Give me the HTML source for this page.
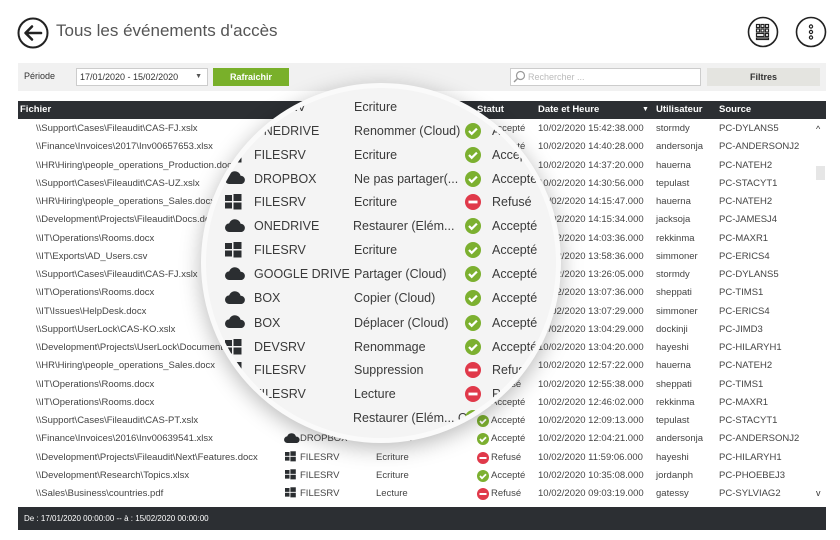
<!DOCTYPE html>
<html><head><meta charset="utf-8">
<style>
*{margin:0;padding:0;box-sizing:border-box}
body{width:840px;height:540px;background:#fff;position:relative;overflow:hidden;font-family:"Liberation Sans",sans-serif;color:#444}
.abs{position:absolute}
.row{position:absolute;left:0;width:840px;height:18px;font-size:9.5px;line-height:18px;white-space:nowrap}
.row span{position:absolute;top:0}
.mrow{position:absolute;left:0;width:840px;height:24px;font-size:12.5px;line-height:24px;color:#3a3a3a;white-space:nowrap}
.mrow span{position:absolute;top:0}
svg{display:block}
</style></head><body>
<svg class="abs" style="left:17px;top:17px" width="32" height="32" viewBox="0 0 32 32"><circle cx="16" cy="16" r="14.5" fill="none" stroke="#222" stroke-width="2"/><path d="M24 16H9M15 9.5L8.5 16l6.5 6.5" fill="none" stroke="#222" stroke-width="2.6" stroke-linecap="round" stroke-linejoin="round"/></svg>
<div class="abs" style="left:56px;top:21px;font-size:17px;color:#555">Tous les événements d'accès</div>
<svg class="abs" style="left:747px;top:16px" width="32" height="32" viewBox="0 0 32 32"><circle cx="16" cy="16" r="14.5" fill="none" stroke="#222" stroke-width="1.6"/><g fill="none" stroke="#222" stroke-width="1.2"><rect x="9.5" y="8.5" width="3" height="3"/><rect x="14" y="8.5" width="3" height="3"/><rect x="18.5" y="8.5" width="3" height="3"/><rect x="9.5" y="13" width="3" height="3"/><rect x="14" y="13" width="3" height="3"/><rect x="18.5" y="13" width="3" height="3"/><rect x="9.5" y="17.5" width="7.5" height="3"/><rect x="18.5" y="17.5" width="3" height="3"/><rect x="9.5" y="22" width="12" height="1.5"/></g></svg>
<svg class="abs" style="left:795px;top:16px" width="32" height="32" viewBox="0 0 32 32"><circle cx="16" cy="16" r="14.5" fill="none" stroke="#222" stroke-width="1.6"/><g fill="none" stroke="#222" stroke-width="1.2"><circle cx="16" cy="10.5" r="1.6"/><circle cx="16" cy="16" r="1.6"/><circle cx="16" cy="21.5" r="1.6"/></g></svg>
<div class="abs" style="left:18px;top:63px;width:808px;height:28px;background:#f1f1f1"></div>
<div class="abs" style="left:24px;top:71px;font-size:9px;color:#333">Période</div>
<div class="abs" style="left:76px;top:68px;width:132px;height:18px;background:#fff;border:1px solid #ccc;font-size:9px;line-height:16px;padding-left:3px;color:#333">17/01/2020 - 15/02/2020<span style="position:absolute;right:5px;font-size:7px;color:#555">▼</span></div>
<div class="abs" style="left:213px;top:68px;width:76px;height:18px;background:#79b02a;color:#fff;font-size:9px;line-height:18px;text-align:center;font-weight:bold">Rafraichir</div>
<div class="abs" style="left:510px;top:68px;width:191px;height:18px;background:#fff;border:1px solid #ccc;font-size:9px;line-height:16px;padding-left:17px;color:#bbb">Rechercher ...</div>
<svg class="abs" style="left:513px;top:70px" width="13" height="13" viewBox="0 0 13 13"><circle cx="7.5" cy="5.5" r="4" fill="none" stroke="#999" stroke-width="1.2"/><path d="M4.5 8.5L1 12" stroke="#999" stroke-width="1.4"/></svg>
<div class="abs" style="left:707px;top:68px;width:113px;height:18px;background:#e4e4e0;font-size:9px;line-height:18px;text-align:center;color:#333;font-weight:bold">Filtres</div>
<div class="abs" style="left:18px;top:101px;width:808px;height:18px;background:#2c2f33"></div>
<div class="row" style="top:101px;color:#fff;font-weight:bold;font-size:9.5px"><span style="left:20px">Fichier</span><span style="left:477px">Statut</span><span style="left:538px">Date et Heure</span><span style="left:642px;font-size:7px">▼</span><span style="left:656px">Utilisateur</span><span style="left:719px">Source</span></div>
<div class="abs" style="left:816px;top:124px;font-size:9px;color:#333">^</div>
<div class="abs" style="left:816px;top:166px;width:9px;height:14px;background:#e6e6e6"></div>
<div class="abs" style="left:816px;top:488px;font-size:9px;color:#333">v</div>
<div class="row" style="top:120px"><span style="left:36px">\\Support\Cases\Fileaudit\CAS-FJ.xslx</span><span style="left:491px">Accepté</span><span style="left:538px">10/02/2020 15:42:38.000</span><span style="left:656px">stormdy</span><span style="left:719px">PC-DYLANS5</span></div>
<div class="row" style="top:138.25px"><span style="left:36px">\\Finance\Invoices\2017\Inv00657653.xlsx</span><span style="left:491px">Accepté</span><span style="left:538px">10/02/2020 14:40:28.000</span><span style="left:656px">andersonja</span><span style="left:719px">PC-ANDERSONJ2</span></div>
<div class="row" style="top:156.5px"><span style="left:36px">\\HR\Hiring\people_operations_Production.docx</span><span style="left:538px">10/02/2020 14:37:20.000</span><span style="left:656px">hauerna</span><span style="left:719px">PC-NATEH2</span></div>
<div class="row" style="top:174.75px"><span style="left:36px">\\Support\Cases\Fileaudit\CAS-UZ.xslx</span><span style="left:538px">10/02/2020 14:30:56.000</span><span style="left:656px">tepulast</span><span style="left:719px">PC-STACYT1</span></div>
<div class="row" style="top:193px"><span style="left:36px">\\HR\Hiring\people_operations_Sales.docx</span><span style="left:538px">10/02/2020 14:15:47.000</span><span style="left:656px">hauerna</span><span style="left:719px">PC-NATEH2</span></div>
<div class="row" style="top:211.25px"><span style="left:36px">\\Development\Projects\Fileaudit\Docs.docx</span><span style="left:538px">10/02/2020 14:15:34.000</span><span style="left:656px">jacksoja</span><span style="left:719px">PC-JAMESJ4</span></div>
<div class="row" style="top:229.5px"><span style="left:36px">\\IT\Operations\Rooms.docx</span><span style="left:538px">10/02/2020 14:03:36.000</span><span style="left:656px">rekkinma</span><span style="left:719px">PC-MAXR1</span></div>
<div class="row" style="top:247.75px"><span style="left:36px">\\IT\Exports\AD_Users.csv</span><span style="left:538px">10/02/2020 13:58:36.000</span><span style="left:656px">simmoner</span><span style="left:719px">PC-ERICS4</span></div>
<div class="row" style="top:266px"><span style="left:36px">\\Support\Cases\Fileaudit\CAS-FJ.xslx</span><span style="left:538px">10/02/2020 13:26:05.000</span><span style="left:656px">stormdy</span><span style="left:719px">PC-DYLANS5</span></div>
<div class="row" style="top:284.25px"><span style="left:36px">\\IT\Operations\Rooms.docx</span><span style="left:538px">10/02/2020 13:07:36.000</span><span style="left:656px">sheppati</span><span style="left:719px">PC-TIMS1</span></div>
<div class="row" style="top:302.5px"><span style="left:36px">\\IT\Issues\HelpDesk.docx</span><span style="left:538px">10/02/2020 13:07:29.000</span><span style="left:656px">simmoner</span><span style="left:719px">PC-ERICS4</span></div>
<div class="row" style="top:320.75px"><span style="left:36px">\\Support\UserLock\CAS-KO.xslx</span><span style="left:538px">10/02/2020 13:04:29.000</span><span style="left:656px">dockinji</span><span style="left:719px">PC-JIMD3</span></div>
<div class="row" style="top:339px"><span style="left:36px">\\Development\Projects\UserLock\Documents.docx</span><span style="left:538px">10/02/2020 13:04:20.000</span><span style="left:656px">hayeshi</span><span style="left:719px">PC-HILARYH1</span></div>
<div class="row" style="top:357.25px"><span style="left:36px">\\HR\Hiring\people_operations_Sales.docx</span><span style="left:491px">Refusé</span><span style="left:538px">10/02/2020 12:57:22.000</span><span style="left:656px">hauerna</span><span style="left:719px">PC-NATEH2</span></div>
<div class="row" style="top:375.5px"><span style="left:36px">\\IT\Operations\Rooms.docx</span><span style="left:491px">Refusé</span><span style="left:538px">10/02/2020 12:55:38.000</span><span style="left:656px">sheppati</span><span style="left:719px">PC-TIMS1</span></div>
<div class="row" style="top:393.75px"><span style="left:36px">\\IT\Operations\Rooms.docx</span><span style="left:491px">Accepté</span><span style="left:538px">10/02/2020 12:46:02.000</span><span style="left:656px">rekkinma</span><span style="left:719px">PC-MAXR1</span></div>
<div class="row" style="top:412px"><span style="left:36px">\\Support\Cases\Fileaudit\CAS-PT.xslx</span><span style="left:300px">BOX</span><span style="left:491px">Accepté</span><span style="left:538px">10/02/2020 12:09:13.000</span><span style="left:656px">tepulast</span><span style="left:719px">PC-STACYT1</span></div>
<div class="row" style="top:430.25px"><span style="left:36px">\\Finance\Invoices\2016\Inv00639541.xlsx</span><span style="left:300px">DROPBOX</span><span style="left:376px">Création</span><span style="left:491px">Accepté</span><span style="left:538px">10/02/2020 12:04:21.000</span><span style="left:656px">andersonja</span><span style="left:719px">PC-ANDERSONJ2</span></div>
<div class="row" style="top:448.5px"><span style="left:36px">\\Development\Projects\Fileaudit\Next\Features.docx</span><span style="left:300px">FILESRV</span><span style="left:376px">Ecriture</span><span style="left:491px">Refusé</span><span style="left:538px">10/02/2020 11:59:06.000</span><span style="left:656px">hayeshi</span><span style="left:719px">PC-HILARYH1</span></div>
<div class="row" style="top:466.75px"><span style="left:36px">\\Development\Research\Topics.xlsx</span><span style="left:300px">FILESRV</span><span style="left:376px">Ecriture</span><span style="left:491px">Accepté</span><span style="left:538px">10/02/2020 10:35:08.000</span><span style="left:656px">jordanph</span><span style="left:719px">PC-PHOEBEJ3</span></div>
<div class="row" style="top:485px"><span style="left:36px">\\Sales\Business\countries.pdf</span><span style="left:300px">FILESRV</span><span style="left:376px">Lecture</span><span style="left:491px">Refusé</span><span style="left:538px">10/02/2020 09:03:19.000</span><span style="left:656px">gatessy</span><span style="left:719px">PC-SYLVIAG2</span></div>
<svg class="abs" style="left:0;top:0" width="840" height="540">
<defs>
<g id="win"><rect x="0" y="0" width="5" height="4.3" /><rect x="6" y="-0.8" width="6" height="5.1"/><rect x="0" y="5.3" width="5" height="4.3"/><rect x="6" y="5.3" width="6" height="5.1"/></g>
<path id="cloud" d="M3.5 10a3.3 3.3 0 0 1 -0.3-6.6A4.6 4.6 0 0 1 12 3.6a3.2 3.2 0 0 1 0.8 6.4z"/>
<g id="ok"><circle r="6" fill="#7cb030"/><path d="M-3 0l2 2.2 4-4" fill="none" stroke="#fff" stroke-width="1.8"/></g>
<g id="no"><circle r="6" fill="#e0394a"/><rect x="-3.5" y="-1" width="7" height="2" fill="#fff"/></g>
</defs>
<g fill="#2b2e31">
<use href="#cloud" transform="translate(284,433)"/>
<use href="#win" transform="translate(285,452) scale(0.9)"/>
<use href="#win" transform="translate(285,470) scale(0.9)"/>
<use href="#win" transform="translate(285,488) scale(0.9)"/>
</g>
<use href="#ok" transform="translate(483,403)"/>
<use href="#ok" transform="translate(483,421)"/>
<use href="#ok" transform="translate(483,439)"/>
<use href="#no" transform="translate(483,458)"/>
<use href="#ok" transform="translate(483,476)"/>
<use href="#no" transform="translate(483,494)"/>
</svg>
<div class="abs" style="left:18px;top:507px;width:808px;height:23px;background:#2c2f33;color:#fff;font-size:8px;line-height:23px;padding-left:6px">De : 17/01/2020 00:00:00 -- à : 15/02/2020 00:00:00</div>
<div class="abs" style="left:201px;top:83px;width:360px;height:360px;border-radius:50%;box-shadow:0 5px 22px rgba(0,0,0,.28);border:5px solid #fafafa;overflow:hidden;background:#f4f4f4">
 <div class="abs" style="left:-206px;top:-88px;width:840px;height:540px">
  <div class="mrow" style="top:71px"><span style="left:254px">FILESRV</span><span style="left:354px">Lecture</span></div>
  <div class="mrow" style="top:95px"><span style="left:254px">FILESRV</span><span style="left:354px">Ecriture</span></div>
  <div class="mrow" style="top:119px"><span style="left:254px">ONEDRIVE</span><span style="left:354px">Renommer (Cloud)</span><span style="left:492px">Accepté</span></div>
  <div class="mrow" style="top:143px"><span style="left:254px">FILESRV</span><span style="left:354px">Ecriture</span><span style="left:492px">Accepté</span></div>
  <div class="mrow" style="top:167px"><span style="left:254px">DROPBOX</span><span style="left:354px">Ne pas partager(...</span><span style="left:492px">Accepté</span></div>
  <div class="mrow" style="top:190px"><span style="left:254px">FILESRV</span><span style="left:354px">Ecriture</span><span style="left:492px">Refusé</span></div>
  <div class="mrow" style="top:214px"><span style="left:254px">ONEDRIVE</span><span style="left:353px">Restaurer (Elém...</span><span style="left:492px">Accepté</span></div>
  <div class="mrow" style="top:238px"><span style="left:254px">FILESRV</span><span style="left:354px">Ecriture</span><span style="left:492px">Accepté</span></div>
  <div class="mrow" style="top:262px"><span style="left:254px">GOOGLE DRIVE</span><span style="left:354px">Partager (Cloud)</span><span style="left:492px">Accepté</span></div>
  <div class="mrow" style="top:286px"><span style="left:254px">BOX</span><span style="left:354px">Copier (Cloud)</span><span style="left:492px">Accepté</span></div>
  <div class="mrow" style="top:311px"><span style="left:254px">BOX</span><span style="left:354px">Déplacer (Cloud)</span><span style="left:492px">Accepté</span></div>
  <div class="mrow" style="top:335px"><span style="left:254px">DEVSRV</span><span style="left:354px">Renommage</span><span style="left:492px">Accepté</span></div>
  <div class="mrow" style="top:358px"><span style="left:254px">FILESRV</span><span style="left:354px">Suppression</span><span style="left:492px">Refusé</span></div>
  <div class="mrow" style="top:382px"><span style="left:254px">FILESRV</span><span style="left:354px">Lecture</span><span style="left:492px">Refusé</span></div>
  <div class="mrow" style="top:406px"><span style="left:254px">BOX</span><span style="left:353px">Restaurer (Elém... Cloud)</span><span style="left:492px">Accepté</span></div>
  <svg class="abs" style="left:0;top:0" width="840" height="540">
   <defs>
    <g id="mwin"><rect x="0" y="0" width="7" height="6"/><rect x="8.5" y="-1" width="8" height="7"/><rect x="0" y="7.5" width="7" height="6"/><rect x="8.5" y="7.5" width="8" height="7"/></g>
    <path id="mcloud" d="M4.5 13a4.3 4.3 0 0 1 -0.4-8.6A6 6 0 0 1 15.6 4.7a4.2 4.2 0 0 1 1 8.3z"/>
    <g id="mok"><circle r="8" fill="#7cb030"/><path d="M-4 0l2.7 2.8 5.2-5.2" fill="none" stroke="#fff" stroke-width="2.2"/></g>
    <g id="mno"><circle r="8" fill="#e0394a"/><rect x="-4.5" y="-1.4" width="9" height="2.8" fill="#fff"/></g>
   </defs>
   <g fill="#2b2e31">
    <use href="#mwin" transform="translate(225,100)"/>
    <use href="#mcloud" transform="translate(225,124)"/>
    <use href="#mwin" transform="translate(225,148)"/>
    <use href="#mcloud" transform="translate(225,171)"/>
    <use href="#mwin" transform="translate(225,195)"/>
    <use href="#mcloud" transform="translate(225,219)"/>
    <use href="#mwin" transform="translate(225,243)"/>
    <use href="#mcloud" transform="translate(225,267)"/>
    <use href="#mcloud" transform="translate(225,291)"/>
    <use href="#mcloud" transform="translate(225,315)"/>
    <use href="#mwin" transform="translate(225,340)"/>
    <use href="#mwin" transform="translate(225,363)"/>
    <use href="#mwin" transform="translate(225,387)"/>
    <use href="#mcloud" transform="translate(225,410)"/>
   </g>
   <use href="#mok" transform="translate(473,131)"/>
   <use href="#mok" transform="translate(473,155)"/>
   <use href="#mok" transform="translate(473,179)"/>
   <use href="#mno" transform="translate(473,202)"/>
   <use href="#mok" transform="translate(473,226)"/>
   <use href="#mok" transform="translate(473,250)"/>
   <use href="#mok" transform="translate(473,274)"/>
   <use href="#mok" transform="translate(473,298)"/>
   <use href="#mok" transform="translate(473,323)"/>
   <use href="#mok" transform="translate(473,347)"/>
   <use href="#mno" transform="translate(473,370)"/>
   <use href="#mno" transform="translate(473,394)"/>
   <use href="#mok" transform="translate(473,418)"/>
  </svg>
 </div>
</div>
</body></html>
